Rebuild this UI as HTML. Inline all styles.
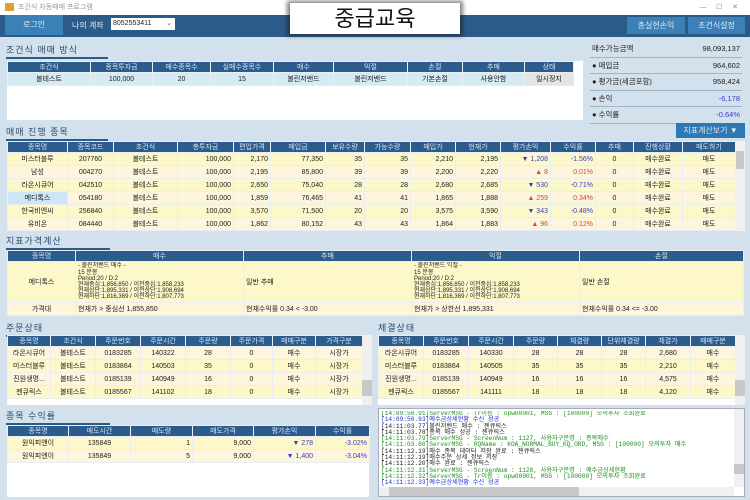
<!DOCTYPE html>
<html><head><meta charset="utf-8">
<style>
*{margin:0;padding:0;box-sizing:border-box}
body{width:750px;height:500px;overflow:hidden;background:#d3e1ec;font-family:"Liberation Sans","Noto Sans CJK KR",sans-serif;font-size:8px;color:#222;position:relative}
.a{position:absolute}
.title{left:0;top:0;width:750px;height:15px;background:#fff;color:#999;font-size:7px;line-height:15px;padding-left:18px}
.tb{left:0;top:15px;width:750px;height:22px;background:#2b5b88}
.btn{background:#3b80b6;color:#dfeaf5;text-align:center;font-size:8px}
.sec{font-size:9px;color:#2a4d70;border-bottom:2px solid #2b5b88;padding-bottom:1px;letter-spacing:1px}
table{border-collapse:collapse;table-layout:fixed;position:absolute}
td,th{border:1px solid #e8eef3;font-size:7px;height:13px;overflow:hidden;white-space:nowrap;padding:0 2px;font-weight:normal}
th{background:#2c5c8c;color:#d8e4ef;height:11px;text-align:center}
.y td{background:#fdf8c9}
.c td{background:#fdf5dc}
.bl td{background:#d6eaf6}
.r{text-align:right}.ce{text-align:center}
.wb{background:#fff}
.dn{color:#3a3ad0}.up{color:#e04040}
.sb{background:#e6e6e6;text-align:center}
.rp div{border-bottom:1px solid #9fb4c6;height:16.5px;line-height:16px;font-size:7.5px;display:flex;justify-content:space-between;padding:0 2px}
.log{font-family:"Liberation Mono","Noto Sans CJK KR",monospace;font-size:6.2px;line-height:6.3px;white-space:nowrap}
.g{color:#1f8f1f}.b{color:#2030d0}.k{color:#222}
</style></head><body>
<div class="a title">조건식 자동매매 프로그램<span style="position:absolute;left:5px;top:3px;width:9px;height:8px;background:#e0a030"></span><span style="position:absolute;right:12px;color:#888">—&nbsp;&nbsp;&nbsp;&nbsp;&nbsp;☐&nbsp;&nbsp;&nbsp;&nbsp;&nbsp;✕</span></div>
<div class="a tb"></div>
<div class="a btn" style="left:5px;top:15px;width:58px;height:20px;line-height:20px">로그인</div>
<div class="a" style="left:72px;top:20px;color:#dfe8f2;font-size:8px">나의 계좌</div>
<div class="a" style="left:111px;top:18px;width:64px;height:12px;background:#fff;font-size:7px;line-height:12px;padding-left:2px">8052553411<span style="position:absolute;right:3px;color:#666">⌄</span></div>
<div class="a btn" style="left:627px;top:17px;width:58px;height:17px;line-height:17px">총실현손익</div>
<div class="a btn" style="left:688px;top:17px;width:57px;height:17px;line-height:17px">조건식설정</div>
<div class="a" style="left:287px;top:1px;width:176px;height:35px;background:#1a1a1a;opacity:.55;filter:blur(2px)"></div>
<div class="a" style="left:290px;top:3px;width:170px;height:31px;background:#fff;text-align:center;font-size:22px;line-height:31px;color:#111">중급교육</div>

<div class="a sec" style="left:6px;top:43px;width:102px">조건식 매매 방식</div>
<div class="a wb" style="left:7px;top:61px;width:576px;height:59px"></div>
<table style="left:7px;top:61px;width:566px">
<colgroup><col style="width:83px"><col style="width:62px"><col style="width:58px"><col style="width:63px"><col style="width:60px"><col style="width:74px"><col style="width:55px"><col style="width:62px"><col style="width:49px"></colgroup>
<tr><th>조건식</th><th>종목투자금</th><th>매수종목수</th><th>실매수종목수</th><th>매수</th><th>익절</th><th>손절</th><th>추매</th><th>상태</th></tr>
<tr class="bl"><td class="ce">볼테스트</td><td class="ce">100,000</td><td class="ce">20</td><td class="ce">15</td><td class="ce">볼린저밴드</td><td class="ce">볼린저밴드</td><td class="ce">기본손절</td><td class="ce">사용안함</td><td class="ce" style="background:#e4e4e4">일시정지</td></tr>
</table>
<div class="a rp" style="left:590px;top:41px;width:152px">
<div><span>매수가능금액</span><span>98,093,137</span></div>
<div><span>● 매입금</span><span>964,602</span></div>
<div><span>● 평가금(세금포함)</span><span>958,424</span></div>
<div><span>● 손익</span><span class="dn">-6,178</span></div>
<div><span>● 수익률</span><span class="dn">-0.64%</span></div>
</div>
<div class="a btn" style="left:676px;top:123px;width:69px;height:15px;line-height:15px;background:#2f78b4">지표계산보기 ▼</div>

<div class="a sec" style="left:6px;top:125px;width:102px">매매 진행 종목</div>
<table style="left:7px;top:141px;width:728px">
<colgroup><col style="width:60px"><col style="width:46px"><col style="width:64px"><col style="width:56px"><col style="width:37px"><col style="width:55px"><col style="width:39px"><col style="width:46px"><col style="width:45px"><col style="width:45px"><col style="width:50px"><col style="width:45px"><col style="width:38px"><col style="width:49px"><col style="width:53px"></colgroup>
<tr><th>종목명</th><th>종목코드</th><th>조건식</th><th>총투자금</th><th>편입가격</th><th>매입금</th><th>보유수량</th><th>가능수량</th><th>매입가</th><th>현재가</th><th>평가손익</th><th>수익률</th><th>추매</th><th>진행상황</th><th>매도하기</th></tr>
<tr class="y"><td class="ce">미스터블루</td><td class="ce">207760</td><td class="ce">볼테스트</td><td class="r">100,000</td><td class="r">2,170</td><td class="r">77,350</td><td class="r">35</td><td class="r">35</td><td class="r">2,210</td><td class="r">2,195</td><td class="r dn">▼ 1,208</td><td class="r dn">-1.56%</td><td class="ce">0</td><td class="ce">매수완료</td><td class="sb">매도</td></tr>
<tr class="c"><td class="ce">남성</td><td class="ce">004270</td><td class="ce">볼테스트</td><td class="r">100,000</td><td class="r">2,195</td><td class="r">85,800</td><td class="r">39</td><td class="r">39</td><td class="r">2,200</td><td class="r">2,220</td><td class="r up">▲ 8</td><td class="r up">0.01%</td><td class="ce">0</td><td class="ce">매수완료</td><td class="sb">매도</td></tr>
<tr class="y"><td class="ce">라온시큐어</td><td class="ce">042510</td><td class="ce">볼테스트</td><td class="r">100,000</td><td class="r">2,650</td><td class="r">75,040</td><td class="r">28</td><td class="r">28</td><td class="r">2,680</td><td class="r">2,685</td><td class="r dn">▼ 530</td><td class="r dn">-0.71%</td><td class="ce">0</td><td class="ce">매수완료</td><td class="sb">매도</td></tr>
<tr class="c"><td class="ce" style="background:#cfe6f7">메디톡스</td><td class="ce">054180</td><td class="ce">볼테스트</td><td class="r">100,000</td><td class="r">1,859</td><td class="r">76,465</td><td class="r">41</td><td class="r">41</td><td class="r">1,865</td><td class="r">1,888</td><td class="r up">▲ 259</td><td class="r up">0.34%</td><td class="ce">0</td><td class="ce">매수완료</td><td class="sb">매도</td></tr>
<tr class="y"><td class="ce">한국비엔씨</td><td class="ce">256840</td><td class="ce">볼테스트</td><td class="r">100,000</td><td class="r">3,570</td><td class="r">71,500</td><td class="r">20</td><td class="r">20</td><td class="r">3,575</td><td class="r">3,590</td><td class="r dn">▼ 343</td><td class="r dn">-0.48%</td><td class="ce">0</td><td class="ce">매수완료</td><td class="sb">매도</td></tr>
<tr class="c"><td class="ce">유비온</td><td class="ce">084440</td><td class="ce">볼테스트</td><td class="r">100,000</td><td class="r">1,862</td><td class="r">80,152</td><td class="r">43</td><td class="r">43</td><td class="r">1,864</td><td class="r">1,883</td><td class="r up">▲ 96</td><td class="r up">0.12%</td><td class="ce">0</td><td class="ce">매수완료</td><td class="sb">매도</td></tr>
</table>
<div class="a" style="left:735px;top:141px;width:10px;height:90px;background:#f0f0f0"><div style="margin:10px 1px;height:18px;background:#c8c8c8"></div></div>

<div class="a sec" style="left:6px;top:234px;width:104px">지표가격계산</div>
<table style="left:7px;top:250px;width:736px">
<colgroup><col style="width:68px"><col style="width:168px"><col style="width:168px"><col style="width:168px"><col style="width:164px"></colgroup>
<tr><th>종목명</th><th>매수</th><th>추매</th><th>익절</th><th>손절</th></tr>
<tr class="y"><td class="ce" style="height:41px">메디톡스</td><td style="font-size:6px;line-height:6.2px">- 볼린저밴드 매수 -<br>15 분봉<br>Period:20 / D:2<br>현재중심:1,856,850 / 이전중심:1,858,233<br>현재상단:1,895,331 / 이전상단:1,908,694<br>현재하단:1,816,369 / 이전하단:1,807,773</td><td>일반 추매</td><td style="font-size:6px;line-height:6.2px">- 볼린저밴드 익절 -<br>15 분봉<br>Period:20 / D:2<br>현재중심:1,856,850 / 이전중심:1,858,233<br>현재상단:1,895,331 / 이전상단:1,908,694<br>현재하단:1,816,369 / 이전하단:1,807,773</td><td>일반 손절</td></tr>
<tr class="c"><td class="ce">가격대</td><td>현재가 &gt; 중심선 1,855,850</td><td>현재수익률 0.34 &lt; -3.00</td><td>현재가 &gt; 상한선 1,895,331</td><td>현재수익률 0.34 &lt;= -3.00</td></tr>
</table>

<div class="a sec" style="left:6px;top:321px;width:102px">주문상태</div>
<div class="a sec" style="left:378px;top:321px;width:102px">체결상태</div>
<div class="a wb" style="left:7px;top:335px;width:365px;height:70px"></div>
<table style="left:7px;top:335px;width:355px">
<colgroup><col style="width:43px"><col style="width:45px"><col style="width:45px"><col style="width:45px"><col style="width:45px"><col style="width:42px"><col style="width:43px"><col style="width:47px"></colgroup>
<tr><th>종목명</th><th>조건식</th><th>주문번호</th><th>주문시간</th><th>주문량</th><th>주문가격</th><th>매매구분</th><th>가격구분</th></tr>
<tr class="c"><td class="ce">라온시큐어</td><td class="ce">볼테스트</td><td class="ce">0183285</td><td class="ce">140322</td><td class="ce">28</td><td class="ce">0</td><td class="ce">매수</td><td class="ce">시장가</td></tr>
<tr class="y"><td class="ce">미스터블루</td><td class="ce">볼테스트</td><td class="ce">0183864</td><td class="ce">140503</td><td class="ce">35</td><td class="ce">0</td><td class="ce">매수</td><td class="ce">시장가</td></tr>
<tr class="c"><td class="ce">진원생명...</td><td class="ce">볼테스트</td><td class="ce">0185139</td><td class="ce">140949</td><td class="ce">16</td><td class="ce">0</td><td class="ce">매수</td><td class="ce">시장가</td></tr>
<tr class="y"><td class="ce">젠큐릭스</td><td class="ce">볼테스트</td><td class="ce">0185567</td><td class="ce">141102</td><td class="ce">18</td><td class="ce">0</td><td class="ce">매수</td><td class="ce">시장가</td></tr>
</table>
<div class="a" style="left:362px;top:335px;width:10px;height:70px;background:#f0f0f0"><div style="margin-top:45px;height:16px;background:#c8c8c8"></div></div>
<div class="a wb" style="left:378px;top:335px;width:367px;height:70px"></div>
<table style="left:378px;top:335px;width:357px">
<colgroup><col style="width:45px"><col style="width:45px"><col style="width:45px"><col style="width:44px"><col style="width:44px"><col style="width:44px"><col style="width:45px"><col style="width:45px"></colgroup>
<tr><th>종목명</th><th>주문번호</th><th>주문시간</th><th>주문량</th><th>체결량</th><th>단위체결량</th><th>체결가</th><th>매매구분</th></tr>
<tr class="c"><td class="ce">라온시큐어</td><td class="ce">0183285</td><td class="ce">140330</td><td class="ce">28</td><td class="ce">28</td><td class="ce">28</td><td class="ce">2,680</td><td class="ce">매수</td></tr>
<tr class="y"><td class="ce">미스터블루</td><td class="ce">0183864</td><td class="ce">140505</td><td class="ce">35</td><td class="ce">35</td><td class="ce">35</td><td class="ce">2,210</td><td class="ce">매수</td></tr>
<tr class="c"><td class="ce">진원생명...</td><td class="ce">0185139</td><td class="ce">140949</td><td class="ce">16</td><td class="ce">16</td><td class="ce">16</td><td class="ce">4,575</td><td class="ce">매수</td></tr>
<tr class="y"><td class="ce">젠큐릭스</td><td class="ce">0185567</td><td class="ce">141111</td><td class="ce">18</td><td class="ce">18</td><td class="ce">18</td><td class="ce">4,120</td><td class="ce">매수</td></tr>
</table>
<div class="a" style="left:735px;top:335px;width:10px;height:70px;background:#f0f0f0"><div style="margin-top:45px;height:16px;background:#c8c8c8"></div></div>

<div class="a sec" style="left:6px;top:409px;width:104px">종목 수익률</div>
<div class="a wb" style="left:7px;top:425px;width:362px;height:72px"></div>
<table style="left:7px;top:425px;width:362px">
<colgroup><col style="width:61px"><col style="width:62px"><col style="width:62px"><col style="width:61px"><col style="width:62px"><col style="width:54px"></colgroup>
<tr><th>종목명</th><th>매도시간</th><th>매도량</th><th>매도가격</th><th>평가손익</th><th>수익률</th></tr>
<tr class="y"><td class="ce">원익피앤이</td><td class="ce">135849</td><td class="r">1</td><td class="r">9,000</td><td class="r dn">▼ 278</td><td class="r dn">-3.02%</td></tr>
<tr class="c"><td class="ce">원익피앤이</td><td class="ce">135849</td><td class="r">5</td><td class="r">9,000</td><td class="r dn">▼ 1,400</td><td class="r dn">-3.04%</td></tr>
</table>

<div class="a wb" style="left:378px;top:408px;width:367px;height:89px;border:1px solid #aab"></div>
<div class="a log" style="left:381px;top:411px;width:352px;height:75px;overflow:hidden">
<div class="g">[14:09:50.91]ServerMSG - Tr이름 : opw00001, MSG : [100000] 모의투자 조회완료</div>
<div class="b">[14:09:50.93]예수금상세현황 수신 성공</div>
<div class="k">[14:11:03.77]볼린저밴드 매수 : 젠큐릭스</div>
<div class="k">[14:11:03.78]종목 매수 성공 : 젠큐릭스</div>
<div class="g">[14:11:03.79]ServerMSG - ScreenNum : 1127, 사용자구분명 : 종목매수</div>
<div class="g">[14:11:03.80]ServerMSG - RQName : KOA_NORMAL_BUY_KQ_ORD, MSG : [100000] 모의투자 매수</div>
<div class="k">[14:11:12.19]매수 종목 데이터 저장 완료 : 젠큐릭스</div>
<div class="k">[14:11:12.19]매수주문 상세 정보 저장</div>
<div class="k">[14:11:12.20]매수 완료 : 젠큐릭스</div>
<div class="g">[14:11:12.31]ServerMSG - ScreenNum : 1128, 사용자구분명 : 예수금상세현황</div>
<div class="g">[14:11:12.32]ServerMSG - Tr이름 : opw00001, MSG : [100000] 모의투자 조회완료</div>
<div class="b">[14:11:12.33]예수금상세현황 수신 성공</div>
</div>
<div class="a" style="left:734px;top:409px;width:10px;height:78px;background:#f0f0f0"><div style="margin-top:55px;height:10px;background:#c8c8c8"></div></div>
<div class="a" style="left:379px;top:487px;width:355px;height:9px;background:#f0f0f0"><div style="margin-left:10px;width:190px;height:9px;background:#c8c8c8"></div></div>
</body></html>
